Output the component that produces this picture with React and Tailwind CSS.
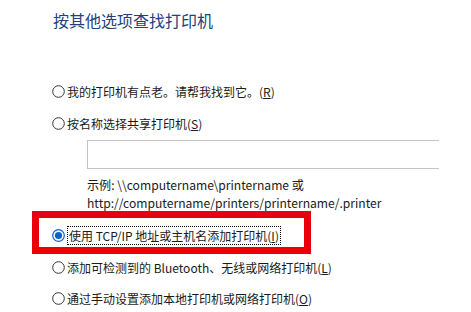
import React from "react";

const font = { fontFamily: '"Noto Sans CJK SC", "Noto Sans", sans-serif' };

function Radio({ checked }) {
  if (checked) {
    return (
      <svg width="13" height="13" viewBox="0 0 13 13" className="shrink-0">
        <circle cx="6.5" cy="6.5" r="5.8" fill="white" stroke="#0a64c8" strokeWidth="1.2" />
        <circle cx="6.5" cy="6.5" r="3.6" fill="#0a64c8" />
      </svg>
    );
  }
  return (
    <svg width="13" height="13" viewBox="0 0 13 13" className="shrink-0">
      <circle cx="6.5" cy="6.5" r="5.8" fill="white" stroke="#333" strokeWidth="1" />
    </svg>
  );
}

function Option({ label, hotkey, checked, className }) {
  return (
    <div className={"flex items-center h-5 gap-[2px] " + (className || "")}>
      <Radio checked={checked} />
      <span
        className={
          "text-[12px] leading-[17px] text-[#1a1a1a] whitespace-nowrap " +
          (checked ? "border border-dotted border-black px-[1px]" : "")
        }
      >
        {label}(<span className="underline">{hotkey}</span>)
      </span>
    </div>
  );
}

export default function App() {
  return (
    <div className="w-[471px] h-[312px] bg-white overflow-hidden" style={font}>
      <div className="pl-[53px] pt-[8px] text-[16px] leading-[24px] text-[#22407c]">
        按其他选项查找打印机
      </div>

      <Option className="mt-[49px] pl-[52px]" label="我的打印机有点老。请帮我找到它。" hotkey="R" />
      <Option className="mt-[12px] pl-[52px]" label="按名称选择共享打印机" hotkey="S" />

      <div className="ml-[87px] mt-[7px] w-[352px] h-[29px] border-l border-t border-b border-[#c4c4c4]" />

      <div className="ml-[87px] mt-[7px] text-[12.1px] leading-[18px] text-[#1a1a1a] whitespace-nowrap">
        <div>示例: \\computername\printername 或</div>
        <div>http://computername/printers/printername/.printer</div>
      </div>

      <div className="ml-[32px] -mt-[1px] w-[279px] h-[43px] border-[7px] border-[#e8000b] pt-[7px] pl-[13px]">
        <Option label="使用 TCP/IP 地址或主机名添加打印机" hotkey="I" checked />
      </div>

      <Option className="mt-[3px] pl-[52px]" label="添加可检测到的 Bluetooth、无线或网络打印机" hotkey="L" />
      <Option className="mt-[11px] pl-[52px]" label="通过手动设置添加本地打印机或网络打印机" hotkey="O" />
    </div>
  );
}
